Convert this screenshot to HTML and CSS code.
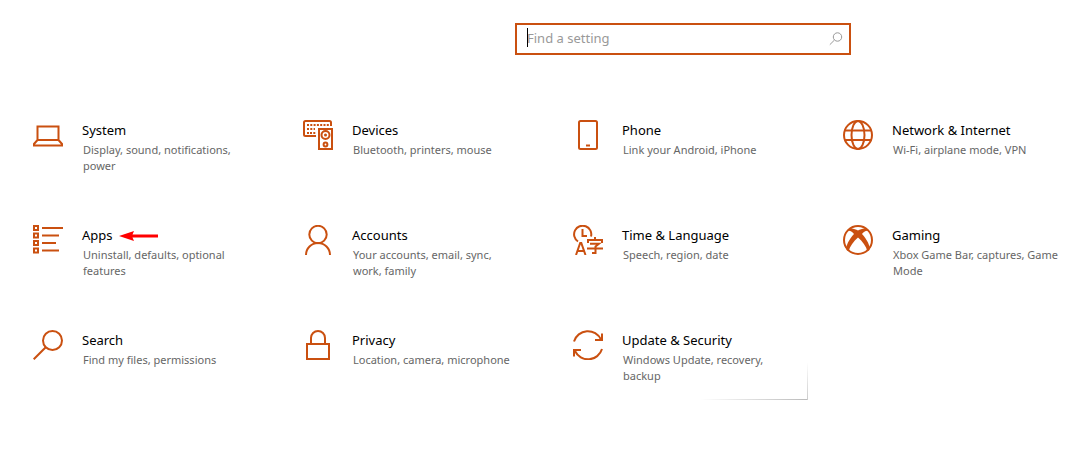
FILE: index.html
```
<!DOCTYPE html>
<html lang="en">
<head>
<meta charset="utf-8">
<title>Settings</title>
<link rel="stylesheet" href="styles.css">
</head>
<body>
<header class="top">
  <form class="search" role="search">
    <span class="caret"></span>
    <input class="search-input" type="text" aria-label="Find a setting" placeholder="Find a setting">
    <button class="search-button" type="button" aria-label="Search">
      <svg width="14" height="14" viewBox="0 0 14 14" fill="none" stroke="#999" stroke-width="1"><circle cx="8.5" cy="5" r="4.2"/><path d="M5.5 8 .8 12.7"/></svg>
    </button>
  </form>
</header>
<main class="grid">
  <a class="tile" href="#system">
    <svg class="icon" viewBox="0 0 30 30"><path d="M4.500 6.500h21V20h-21zM4.500 20 1 24v1.500h28V24l-3.500-4"/></svg>
    <span class="text"><span class="title">System</span><span class="desc">Display, sound, notifications, power</span></span>
  </a>
  <a class="tile" href="#devices">
    <svg class="icon" viewBox="0 0 30 30"><path d="M13 16H2.500Q1 16 1 14.500V2.500Q1 1 2.500 1H26.500Q28 1 28 2.500V6M16 29V9h13v20z"/><path d="M4 5h22" stroke-dasharray="2 1.300"/><path d="M4 9h8M4 13h2M7 13h6" stroke-dasharray="2 1.300"/><circle cx="22.500" cy="15" r="4"/><circle class="solid" cx="22.500" cy="15" r="1.500"/><circle cx="22.500" cy="24.500" r="1.900"/></svg>
    <span class="text"><span class="title">Devices</span><span class="desc">Bluetooth, printers, mouse</span></span>
  </a>
  <a class="tile" href="#phone">
    <svg class="icon" viewBox="0 0 30 30"><rect x="6" y="1" width="18" height="28" rx="1.500"/><path d="M13 25.500h4"/></svg>
    <span class="text"><span class="title">Phone</span><span class="desc">Link your Android, iPhone</span></span>
  </a>
  <a class="tile" href="#network">
    <svg class="icon" viewBox="0 0 30 30"><circle cx="15" cy="15" r="14"/><ellipse cx="15" cy="15" rx="6.500" ry="14"/><path d="M2 10.500h26M2 20h26"/></svg>
    <span class="text"><span class="title">Network &amp; Internet</span><span class="desc">Wi-Fi, airplane mode, VPN</span></span>
  </a>
  <a class="tile" href="#apps">
    <svg class="icon" viewBox="0 0 30 30"><path d="M1 1h4v4H1zM1 8.500h4v4H1zM1 16h4v4H1zM1 23.500h4v4H1z"/><path d="M9 3h21M9 10.500h17M9 18h14M9 25.500h17"/></svg>
    <span class="text"><span class="title">Apps<svg class="arrow" width="40" height="10" viewBox="0 0 40 10"><path d="M0 5 15 0 13.500 3.500H39v3H13.500L15 10z"/></svg></span><span class="desc">Uninstall, defaults, optional features</span></span>
  </a>
  <a class="tile" href="#accounts">
    <svg class="icon" viewBox="0 0 30 30"><circle cx="15" cy="9.500" r="8.700"/><path d="M3 30a12 12 0 0 1 24 0"/></svg>
    <span class="text"><span class="title">Accounts</span><span class="desc">Your accounts, email, sync, work,&nbsp;family</span></span>
  </a>
  <a class="tile" href="#time">
    <svg class="icon" viewBox="0 0 30 30"><path d="M5 16.500A8.600 8.600 0 1 1 18 11.500M9.500 4v7H14"/><path d="M3 30 7.200 18h1.100L12.500 30M4.500 26h7"/><path d="M15 18v-3h14v3M22 12v3M17 18.700h9L22.500 21.500V28H19M14 23.500h16"/></svg>
    <span class="text"><span class="title">Time &amp; Language</span><span class="desc">Speech, region, date</span></span>
  </a>
  <a class="tile" href="#gaming">
    <svg class="icon" viewBox="0 0 30 30"><circle cx="15" cy="15" r="14"/><path class="solid" d="M5 4.500C8 2.300 12 3.800 15 5.500 18 3.800 22 2.300 25 4.500L25.500 6C23 5.200 20.500 7 19 9 24 14.500 27.500 21 26.500 25L24.500 26.500C23 21 19.500 16.500 15 12.500 10.500 16.500 7 21 5.500 26.500L3.500 25C2.500 21 6 14.500 11 9 9.500 7 7 5.200 4.500 6Z"/></svg>
    <span class="text"><span class="title">Gaming</span><span class="desc">Xbox Game Bar, captures, Game Mode</span></span>
  </a>
  <a class="tile" href="#search">
    <svg class="icon" viewBox="0 0 30 30"><circle cx="19.500" cy="10.500" r="9.500"/><path d="M12.500 17.500.7 29.300"/></svg>
    <span class="text"><span class="title">Search</span><span class="desc">Find my files, permissions</span></span>
  </a>
  <a class="tile" href="#privacy">
    <svg class="icon" viewBox="0 0 30 30"><path d="M4 14h22v15H4zM8 14V8a7 7 0 0 1 14 0v6"/></svg>
    <span class="text"><span class="title">Privacy</span><span class="desc">Location, camera, microphone</span></span>
  </a>
  <a class="tile update" href="#update">
    <svg class="icon" viewBox="0 0 30 30"><path d="M1 11.500A14.500 14.500 0 0 1 28 9.500M29 3.500V10h-7M29 19A14.500 14.500 0 0 1 2 21M1 26.500V20h7"/></svg>
    <span class="text"><span class="title">Update &amp; Security</span><span class="desc">Windows Update, recovery, backup</span></span>
  </a>
</main>
</body>
</html>
```
FILE: styles.css
```
* {
  box-sizing: border-box;
}

body {
  margin: 0;
  background: #fff;
  color: #000;
  font-family: "Noto Sans", "Open Sans", sans-serif;
}

.top {
  padding: 23px 16px 0 515px;
}

.search {
  position: relative;
  display: flex;
  align-items: center;
  max-width: 336px;
  height: 32px;
  padding: 0 6px 2px 10px;
  border: 2px solid #ca5010;
}

.caret {
  position: absolute;
  left: 10px;
  top: 3px;
  width: 1px;
  height: 19px;
  background: #000;
}

.search-input {
  flex: 1;
  min-width: 0;
  padding: 0;
  border: 0;
  outline: 0;
  background: none;
  font: 13px/20px "Noto Sans", "Open Sans", sans-serif;
}

.search-input::placeholder {
  color: #999;
  opacity: 1;
}

.search-button {
  display: flex;
  padding: 2px 0 0;
  border: 0;
  background: none;
}

.grid {
  display: grid;
  grid-template-columns: repeat(4, 1fr);
  grid-auto-rows: minmax(60px, auto);
  gap: 45px 44px;
  padding: 65px 7px 48px 33px;
}

.tile {
  position: relative;
  display: flex;
  gap: 19px;
  color: inherit;
  text-decoration: none;
}

.icon {
  flex: none;
  width: 30px;
  height: 30px;
  fill: none;
  stroke: #ca5010;
  stroke-width: 2;
}

.solid {
  fill: #ca5010;
  stroke: none;
}

.text {
  display: flex;
  flex-direction: column;
  flex: 1;
  min-width: 0;
}

.title {
  display: flex;
  align-items: center;
  gap: 6px;
  font-size: 13px;
  line-height: 20px;
}

.arrow {
  margin-top: 2px;
  fill: #f00;
}

.desc {
  padding: 2px 0 0 1px;
  font-size: 11px;
  line-height: 16px;
  color: #666;
}

.update::before,
.update::after {
  content: "";
  position: absolute;
  right: -9px;
  bottom: -10px;
}

.update::before {
  width: 108px;
  height: 1px;
  background: linear-gradient(to right, transparent, #bbb);
}

.update::after {
  width: 1px;
  height: 38px;
  background: linear-gradient(to bottom, transparent, #ccc);
}
```
